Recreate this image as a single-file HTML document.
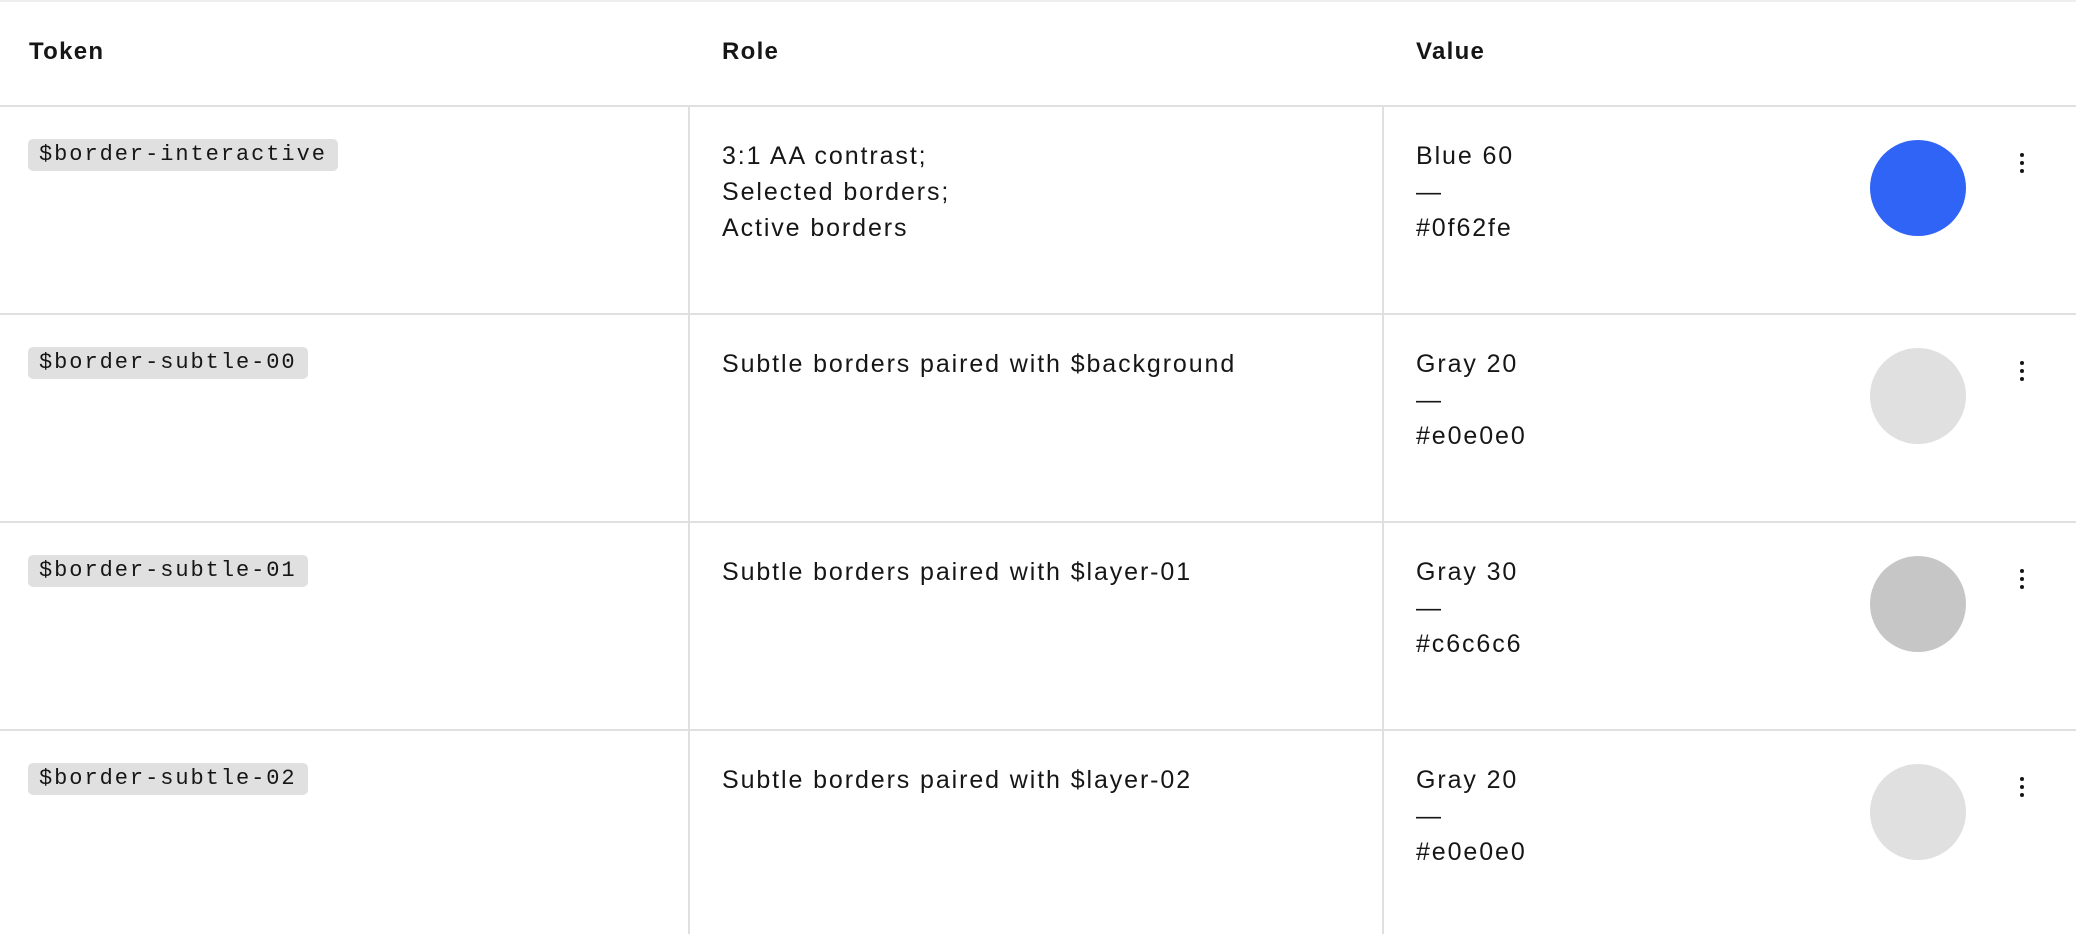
<!DOCTYPE html>
<html><head><style>
body{margin:0;width:2076px;height:934px;background:#fff;position:relative;overflow:hidden;font-family:"Liberation Sans",sans-serif;color:#161616}
.topl{position:absolute;left:0;top:0;width:2076px;height:2px;background:#eee}
.hl{position:absolute;left:0;width:2076px;height:2px;background:#e0e0e0}
.vl{position:absolute;top:106px;height:828px;width:2px;background:#e0e0e0}
.h{position:absolute;top:34px;font-weight:bold;font-size:24px;line-height:36px;letter-spacing:1.3px}
.t{position:absolute;font-size:25px;line-height:36px;letter-spacing:1.9px}
.tag{position:absolute;left:28px;height:32px;line-height:32px;background:#e0e0e0;border-radius:5px;padding:0 11px;font-family:"Liberation Mono",monospace;font-size:22px;letter-spacing:1.95px;color:#161616}
.c{position:absolute;left:1870px;width:96px;height:96px;border-radius:50%}
.k{position:absolute;left:2020px;width:4px}
.k i{display:block;width:4px;height:4px;border-radius:50%;background:#161616;margin-bottom:4px}
</style></head><body>
<div class="topl"></div>
<div class="h" style="left:29px">Token</div>
<div class="h" style="left:722px">Role</div>
<div class="h" style="left:1416px">Value</div>
<div class="hl" style="top:105px"></div>
<div class="hl" style="top:313px"></div>
<div class="hl" style="top:521px"></div>
<div class="hl" style="top:729px"></div>
<div class="vl" style="left:688px"></div>
<div class="vl" style="left:1382px"></div>

<div class="tag" style="top:139px">$border-interactive</div>
<div class="t" style="left:722px;top:138px">3:1 AA contrast;<br>Selected borders;<br>Active borders</div>
<div class="t" style="left:1416px;top:138px">Blue 60<br>—<br>#0f62fe</div>
<div class="c" style="top:140px;background:#2f64f6"></div>
<div class="k" style="top:153px"><i></i><i></i><i></i></div>

<div class="tag" style="top:347px">$border-subtle-00</div>
<div class="t" style="left:722px;top:346px">Subtle borders paired with $background</div>
<div class="t" style="left:1416px;top:346px">Gray 20<br>—<br>#e0e0e0</div>
<div class="c" style="top:348px;background:#e0e0e0"></div>
<div class="k" style="top:361px"><i></i><i></i><i></i></div>

<div class="tag" style="top:555px">$border-subtle-01</div>
<div class="t" style="left:722px;top:554px">Subtle borders paired with $layer-01</div>
<div class="t" style="left:1416px;top:554px">Gray 30<br>—<br>#c6c6c6</div>
<div class="c" style="top:556px;background:#c6c6c6"></div>
<div class="k" style="top:569px"><i></i><i></i><i></i></div>

<div class="tag" style="top:763px">$border-subtle-02</div>
<div class="t" style="left:722px;top:762px">Subtle borders paired with $layer-02</div>
<div class="t" style="left:1416px;top:762px">Gray 20<br>—<br>#e0e0e0</div>
<div class="c" style="top:764px;background:#e0e0e0"></div>
<div class="k" style="top:777px"><i></i><i></i><i></i></div>
</body></html>
